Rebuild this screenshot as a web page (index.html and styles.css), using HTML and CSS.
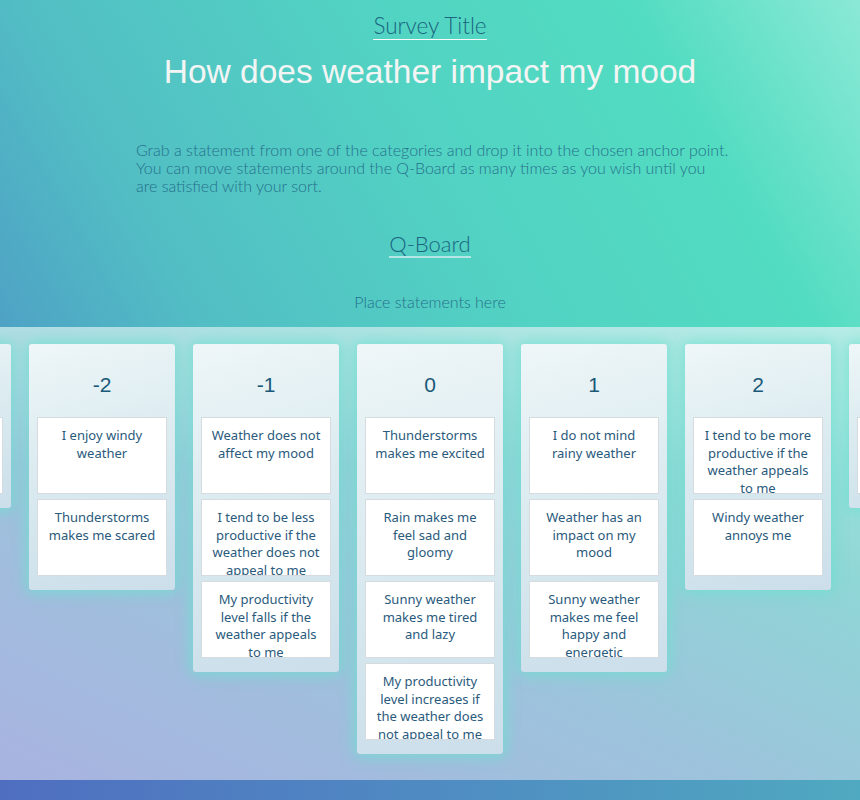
FILE: index.html
```html
<!DOCTYPE html>
<html lang="en">
<head>
<meta charset="utf-8">
<title>How does weather impact my mood</title>
<link rel="stylesheet" href="styles.css">
</head>
<body>
<div class="page">
  <header class="hero">
    <div class="survey-label-wrap"><h2 class="survey-label">Survey Title</h2></div>
    <h1 class="survey-title">How does weather impact my mood</h1>
    <p class="instructions">Grab a statement from one of the categories and drop it into the chosen anchor point.<br>You can move statements around the Q-Board as many times as you wish until you<br>are satisfied with your sort.</p>
    <div class="board-label-wrap"><h2 class="board-label">Q-Board</h2></div>
    <p class="hint">Place statements here</p>
  </header>

  <main class="board">
    <div class="columns">
      <section class="column">
        <h3 class="column-score">-3</h3>
        <div class="card">Rainy weather makes me anxious</div>
      </section>
      <section class="column">
        <h3 class="column-score">-2</h3>
        <div class="card">I enjoy windy weather</div>
        <div class="card">Thunderstorms makes me scared</div>
      </section>
      <section class="column">
        <h3 class="column-score">-1</h3>
        <div class="card">Weather does not affect my mood</div>
        <div class="card">I tend to be less productive if the weather does not appeal to me</div>
        <div class="card">My productivity level falls if the weather appeals to me</div>
      </section>
      <section class="column">
        <h3 class="column-score">0</h3>
        <div class="card">Thunderstorms makes me excited</div>
        <div class="card">Rain makes me feel sad and gloomy</div>
        <div class="card">Sunny weather makes me tired and lazy</div>
        <div class="card">My productivity level increases if the weather does not appeal to me</div>
      </section>
      <section class="column">
        <h3 class="column-score">1</h3>
        <div class="card">I do not mind rainy weather</div>
        <div class="card">Weather has an impact on my mood</div>
        <div class="card">Sunny weather makes me feel happy and energetic</div>
      </section>
      <section class="column">
        <h3 class="column-score">2</h3>
        <div class="card">I tend to be more productive if the weather appeals to me</div>
        <div class="card">Windy weather annoys me</div>
      </section>
      <section class="column">
        <h3 class="column-score">3</h3>
        <div class="card">I feel calm when it snows</div>
      </section>
    </div>
  </main>

  <footer class="footer"></footer>
</div>
</body>
</html>
```

FILE: styles.css
```css
html, body {
  margin: 0;
  padding: 0;
}

body {
  width: 860px;
  height: 800px;
  overflow: hidden;
  font-family: "Lato", "Open Sans", sans-serif;
}

.page {
  display: flex;
  flex-direction: column;
  height: 800px;
}

/* ---------- hero ---------- */
.hero {
  height: 327px;
  box-sizing: border-box;
  padding-top: 13px;
  text-align: center;
  background: linear-gradient(60deg, #4ea2c5 0%, #52bec4 20%, #52d2c3 50%, #52dcc1 78%, #8ae9d6 100%);
}

.survey-label-wrap,
.board-label-wrap {
  display: flex;
  justify-content: center;
}

.survey-label {
  margin: 0;
  font-size: 22.5px;
  line-height: 26px;
  font-weight: 300;
  color: #1a6580;
  border-bottom: 1px solid #f4fbfa;
}

.survey-title {
  margin: 12px 0 0;
  font-family: "Liberation Sans", Arial, sans-serif;
  font-size: 33.5px;
  line-height: 40px;
  font-weight: 400;
  color: #f3f5f4;
}

.instructions {
  width: 600px;
  margin: 49px 0 0 136px;
  text-align: left;
  white-space: nowrap;
  font-size: 16px;
  line-height: 18px;
  font-weight: 300;
  color: #26708c;
}

.board-label {
  margin: 37px 0 0;
  font-size: 22px;
  line-height: 24px;
  font-weight: 300;
  color: #1a6580;
  border-bottom: 2px solid #b4e6e6;
}

.hint {
  margin: 35px 0 0;
  font-size: 16px;
  line-height: 18px;
  font-weight: 300;
  color: #26708c;
}

/* ---------- board ---------- */
.board {
  flex: 1;
  overflow: hidden;
  padding-top: 17px;
  background:
    linear-gradient(180deg, rgba(200, 236, 236, 0.55) 0%, rgba(200, 236, 236, 0) 30%),
    linear-gradient(25deg, #a8b3e0 0%, #9dc3dc 40%, #8fd6d6 70%, #a6ece0 100%);
}

.columns {
  display: flex;
  justify-content: center;
  align-items: flex-start;
  gap: 18px;
}

.column {
  flex: 0 0 146px;
  box-sizing: border-box;
  padding: 8px 8px 14px;
  border-radius: 3px;
  background: linear-gradient(165deg, #eef6f8 0%, #dbebf0 45%, #cbdeea 100%);
  box-shadow: 0 0 14px 3px rgba(110, 224, 208, 0.75);
  display: flex;
  flex-direction: column;
  gap: 5px;
}

.column-score {
  margin: 0 0 -5px;
  height: 65px;
  line-height: 65px;
  text-align: center;
  font-family: "Liberation Sans", Arial, sans-serif;
  font-size: 21px;
  font-weight: 400;
  color: #1a5878;
}

.card {
  height: 77px;
  box-sizing: border-box;
  overflow: hidden;
  padding: 9px 6px 0;
  background: #ffffff;
  border: 1px solid #d6dbe0;
  text-align: center;
  font-family: "Noto Sans", "Open Sans", sans-serif;
  font-size: 13px;
  line-height: 17.5px;
  color: #2a5a7c;
}

/* ---------- footer ---------- */
.footer {
  height: 20px;
  background: linear-gradient(90deg, #4f6ec0 0%, #4f8bc2 50%, #4fa9c0 100%);
}
```
